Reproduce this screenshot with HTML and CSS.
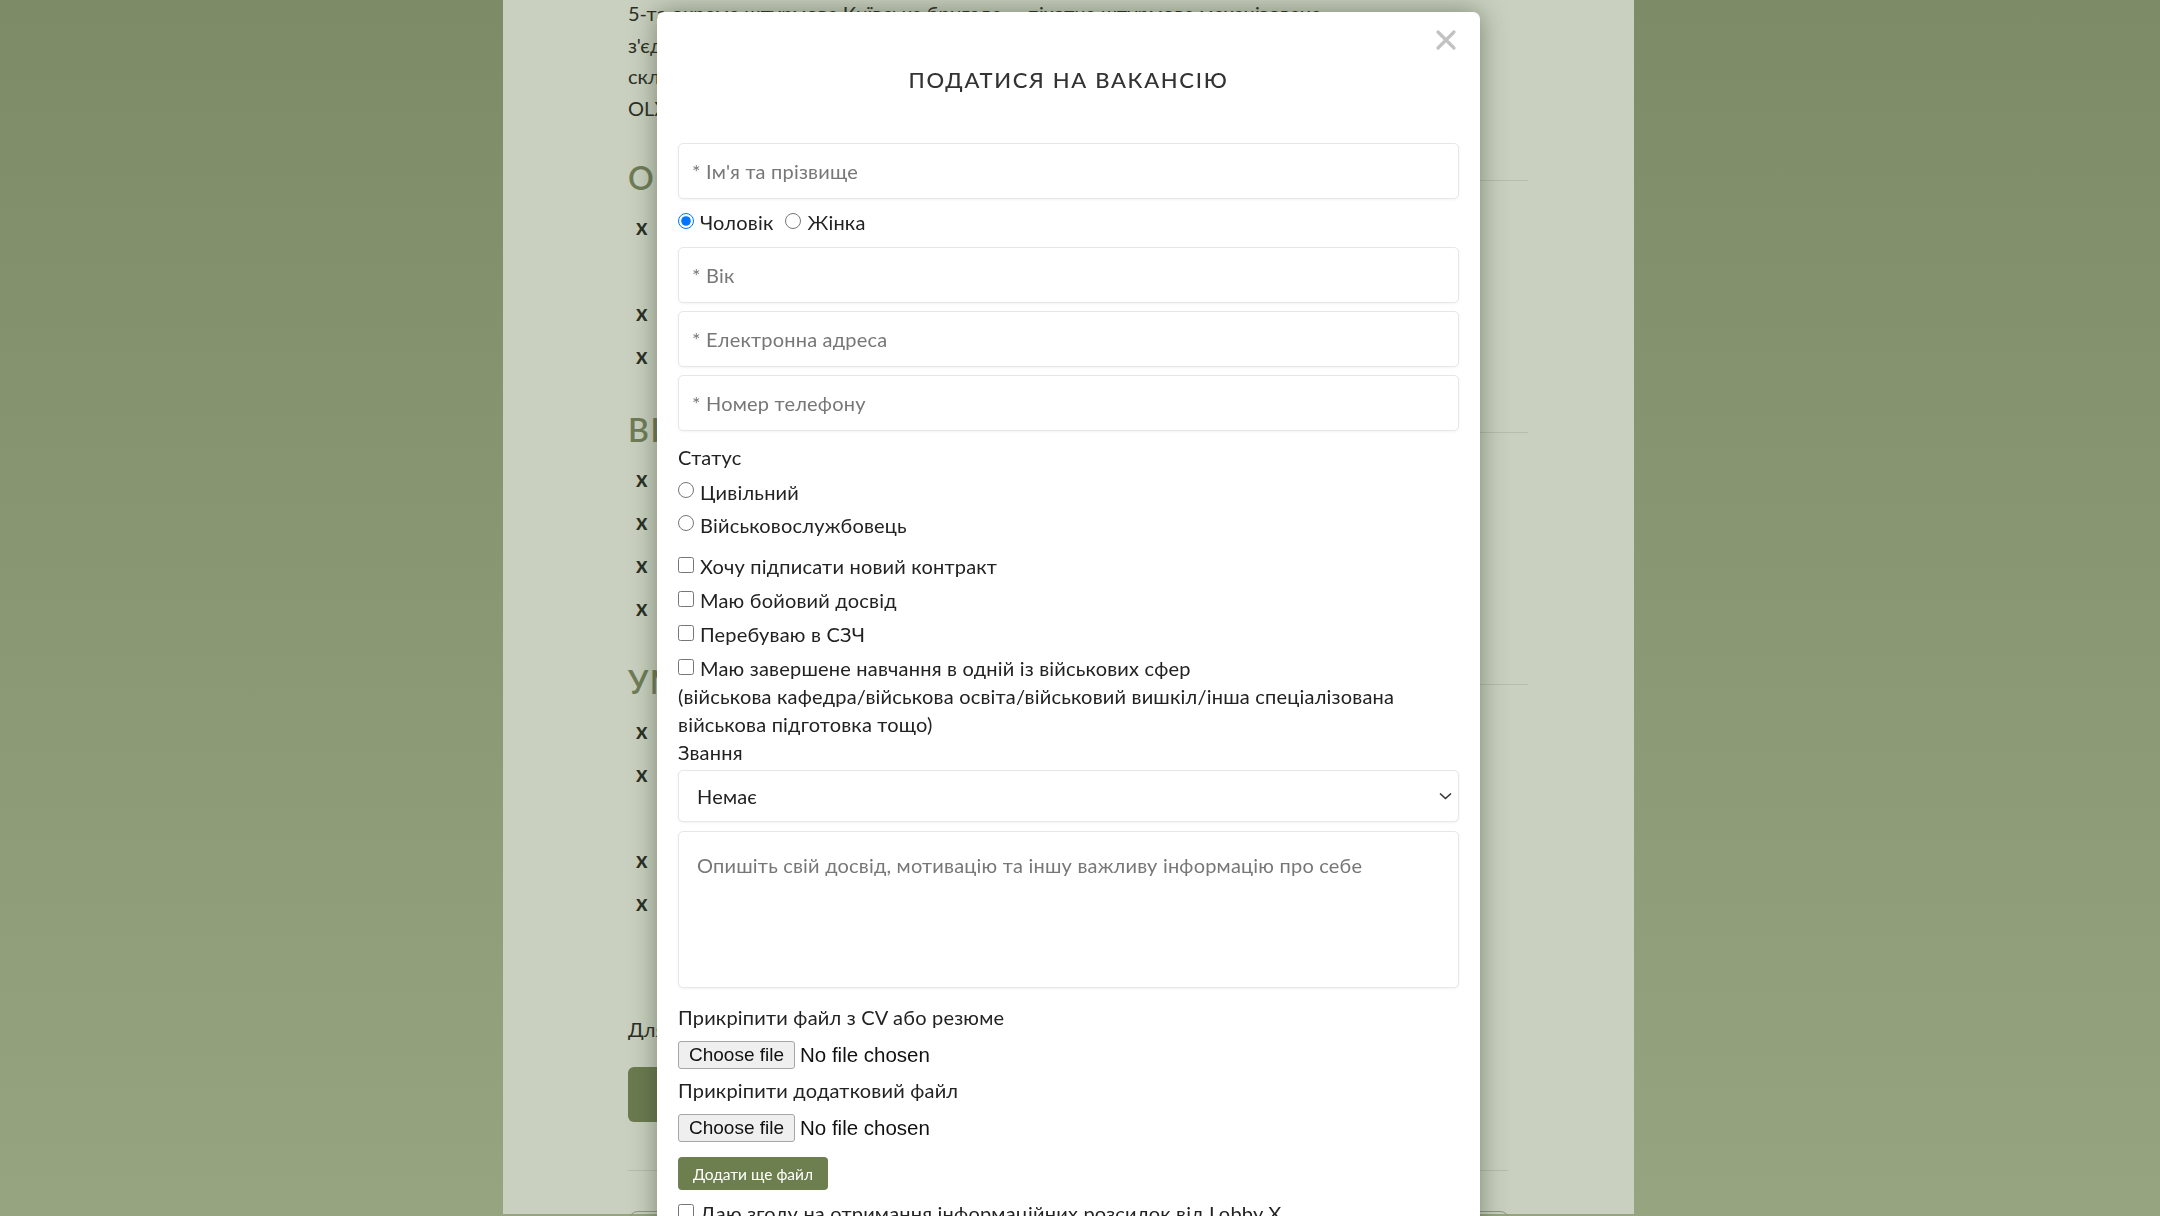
FILE: index.html
```html
<!doctype html>
<html lang="uk">
<head>
	<meta charset="utf-8">
	<title>Вакансія - 5-та окрема штурмова Київська бригада</title>
	<link rel="stylesheet" href="styles.css">
</head>
<body>
	<div class="page">
		<div class="content">
			<p class="intro">5-та окрема штурмова Київська бригада — піхотна штурмова механізована<br>
			з'єднання Сил оборони України, що виконує бойові завдання на<br>
			складних ділянках фронту. Бригада шукає вмотивованих людей до<br>
			OLX-команди підрозділу та інших напрямків.</p>

			<h2 class="section-title">Обов'язки</h2>
			<ul class="list">
				<li>ведення обліку особового складу, документообігу та звітності підрозділу, взаємодія зі штабом</li>
				<li>підготовка наказів і розпоряджень</li>
				<li>робота з базами даних підрозділу</li>
			</ul>

			<h2 class="section-title">Вимоги</h2>
			<ul class="list">
				<li>вища або професійна освіта</li>
				<li>впевнене користування ПК</li>
				<li>відповідальність та уважність</li>
				<li>готовність до навчання</li>
			</ul>

			<h2 class="section-title">Умови</h2>
			<ul class="list">
				<li>офіційне грошове забезпечення</li>
				<li>навчання та супровід від досвідчених інструкторів бригади на всіх етапах служби</li>
				<li>забезпечення спорядженням</li>
				<li>соціальні гарантії та підтримка родин військовослужбовців протягом усього контракту</li>
			</ul>

			<p class="apply-note">Для подання заявки натисніть кнопку нижче</p>
			<button class="apply-btn" type="button">Подати заявку</button>
			<div class="divider"></div>
			<div class="share-box"></div>
		</div>
	</div>

	<div class="overlay">
		<div class="modal">
			<button class="modal-close" type="button" aria-label="Закрити">
				<svg width="22" height="22" viewBox="0 0 22 22"><path d="M3 3 L19 19 M19 3 L3 19" stroke="#c2c2c2" stroke-width="3.2" stroke-linecap="round"/></svg>
			</button>
			<h3 class="modal-title">ПОДАТИСЯ НА ВАКАНСІЮ</h3>

			<form class="apply-form">
				<input class="field" type="text" placeholder="* Ім'я та прізвище">
				<div class="gender">
					<label class="inline"><input type="radio" name="gender" checked> Чоловік</label>
					<label class="inline"><input type="radio" name="gender"> Жінка</label>
				</div>
				<input class="field" type="text" placeholder="* Вік">
				<input class="field" type="email" placeholder="* Електронна адреса">
				<input class="field" type="tel" placeholder="* Номер телефону">

				<div class="label status-label">Статус</div>
				<label class="option"><input type="radio" name="status"> Цивільний</label>
				<label class="option"><input type="radio" name="status"> Військовослужбовець</label>

				<div class="checks">
					<label class="option check"><input type="checkbox"> Хочу підписати новий контракт</label>
					<label class="option check"><input type="checkbox"> Маю бойовий досвід</label>
					<label class="option check"><input type="checkbox"> Перебуваю в СЗЧ</label>
					<label class="option check"><input type="checkbox"> Маю завершене навчання в одній із військових сфер</label>
					<p class="hint">(військова кафедра/військова освіта/військовий вишкіл/інша спеціалізована військова підготовка тощо)</p>
				</div>

				<div class="label">Звання</div>
				<div class="select-wrap">
					<select class="field select">
						<option>Немає</option>
					</select>
					<svg class="chevron" width="13" height="8" viewBox="0 0 13 8"><path d="M1 1.5 L6.5 6.5 L12 1.5" fill="none" stroke="#333" stroke-width="1.6"/></svg>
				</div>
				<textarea class="field area" placeholder="Опишіть свій досвід, мотивацію та іншу важливу інформацію про себе"></textarea>

				<div class="label file-label">Прикріпити файл з CV або резюме</div>
				<div class="file"><span class="file-btn">Choose file</span><span class="file-name">No file chosen</span></div>
				<div class="label file-label2">Прикріпити додатковий файл</div>
				<div class="file"><span class="file-btn">Choose file</span><span class="file-name">No file chosen</span></div>

				<button class="add-file" type="button">Додати ще файл</button>

				<label class="option check consent"><input type="checkbox"> Даю згоду на отримання інформаційних розсилок від Lobby X</label>
			</form>
		</div>
	</div>
</body>
</html>
```

FILE: styles.css
```css
	html, body {
		height: 1216px;
		overflow: hidden;
	}
	body {
		margin: 0;
		padding-right: 23px;
		background: linear-gradient(#7d8b66, #96a57f);
		font-family: "Lato", "Open Sans", sans-serif;
	}
	.page {
		width: 1131px;
		height: 1216px;
		margin: 0 auto;
		background: #c9d0bf;
	}
	.content {
		padding-left: 125px;
		width: 900px;
		color: #2b2f25;
		font-size: 20px;
	}
	.intro {
		margin: -2px 0 0;
		line-height: 31.7px;
	}
	.section-title {
		display: flex;
		align-items: center;
		margin: 33px 0 0;
		height: 40px;
		font-size: 32px;
		font-weight: 600;
		letter-spacing: 1.5px;
		text-transform: uppercase;
		color: #6f7c57;
	}
	.section-title::after {
		content: "";
		flex: 1;
		margin-left: 20px;
		margin-top: 6px;
		border-top: 1px solid #b6bda9;
	}
	.list {
		list-style: none;
		margin: 7px 0 0;
		padding: 0;
		width: 800px;
	}
	.list li {
		display: flex;
		line-height: 43px;
	}
	.list li::before {
		content: "x";
		flex: none;
		width: 40px;
		padding-left: 8px;
		font-weight: 700;
		font-size: 22px;
	}
	.apply-note {
		margin: 46px 0 0;
		line-height: 32px;
	}
	.apply-btn {
		display: block;
		margin-top: 22px;
		width: 320px;
		height: 55px;
		border: none;
		border-radius: 6px;
		background: #6b7a4f;
	}
	.divider {
		margin-top: 48px;
		width: 880px;
		border-top: 1px solid #b6bda9;
	}
	.share-box {
		margin-top: 40px;
		width: 880px;
		height: 80px;
		border: 1px solid #8e9582;
		border-radius: 10px;
	}

	/* modal */
	.overlay {
		position: fixed;
		top: 0;
		left: 0;
		right: 23px;
		bottom: 0;
	}
	.modal {
		position: relative;
		width: 823px;
		box-sizing: border-box;
		margin: 12px auto 0;
		padding: 53px 21px 40px;
		background: #fff;
		border-radius: 7px;
		box-shadow: 0 0 26px rgba(45, 55, 35, .5);
		color: #222;
		font-size: 20px;
		letter-spacing: .2px;
	}
	.modal-close {
		position: absolute;
		top: 17px;
		right: 23px;
		padding: 0;
		border: none;
		background: none;
		width: 22px;
		height: 22px;
	}
	.modal-title {
		margin: 0 0 48px;
		line-height: 30px;
		text-align: center;
		font-size: 22px;
		font-weight: 500;
		letter-spacing: 1.7px;
		color: #333;
	}
	.field {
		display: block;
		width: 100%;
		box-sizing: border-box;
		height: 56px;
		margin: 0 0 8px;
		padding: 0 13px;
		border: 1px solid #e7e7e7;
		border-radius: 5px;
		box-shadow: 0 1px 3px rgba(0, 0, 0, .05);
		font-family: inherit;
		font-size: 20px;
		letter-spacing: .2px;
		color: #222;
		background: #fff;
	}
	.field::placeholder {
		color: #777;
	}
	.gender {
		display: flex;
		align-items: center;
		gap: 12px;
		height: 30px;
		margin: 0 0 10px;
	}
	.inline, .option {
		display: flex;
		align-items: center;
		gap: 6px;
	}
	.apply-form input[type=radio],
	.apply-form input[type=checkbox] {
		width: 16px;
		height: 16px;
		margin: 0 0 3px;
	}
	.label {
		line-height: 28px;
	}
	.status-label {
		margin-top: 12px;
	}
	.option {
		height: 33px;
	}
	.status-label + .option {
		margin-top: 4px;
	}
	.checks {
		margin-top: 8px;
	}
	.option.check {
		height: 34px;
	}
	.hint {
		margin: -3px 0 0;
		line-height: 28px;
	}
	.select-wrap {
		position: relative;
		margin-top: 4px;
	}
	.select {
		height: 52px;
		margin: 0;
		padding: 0 18px;
		appearance: none;
	}
	.chevron {
		position: absolute;
		right: 7px;
		top: 22px;
	}
	.area {
		height: 157px;
		margin: 9px 0 0;
		padding: 20px 18px;
		line-height: 26px;
		resize: none;
	}
	.file-label {
		margin-top: 15px;
	}
	.file-label2 {
		margin-top: 7px;
	}
	.file {
		display: flex;
		align-items: center;
		gap: 5px;
		margin-top: 10px;
		height: 28px;
		font-family: "Liberation Sans", Arial, sans-serif;
		font-size: 19px;
		letter-spacing: 0;
		color: #111;
	}
	.file-name {
		font-size: 20.5px;
	}
	.file-btn {
		display: flex;
		align-items: center;
		justify-content: center;
		box-sizing: border-box;
		width: 117px;
		height: 28px;
		border: 1px solid #a6a6a6;
		border-radius: 3px;
		background: #efefef;
	}
	.add-file {
		display: block;
		margin-top: 15px;
		width: 150px;
		height: 33px;
		border: none;
		border-radius: 4px;
		background: #6e7f4f;
		color: #fff;
		font-family: inherit;
		font-size: 15.5px;
	}
	.consent {
		margin-top: 6px;
	}
```
